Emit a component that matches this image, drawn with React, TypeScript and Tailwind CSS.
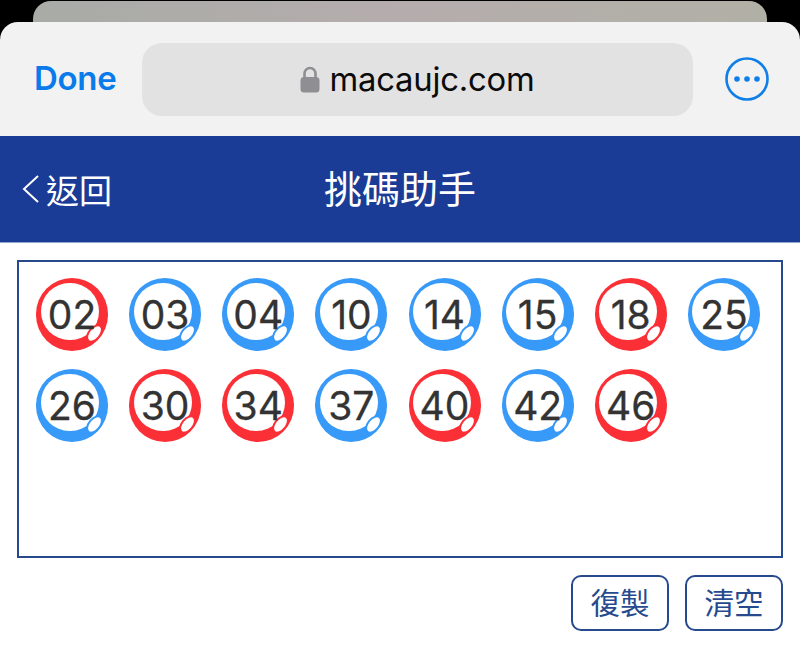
const reds = new Set(["02", "18", "30", "34", "40", "46"]);
const nums = ["02","03","04","10","14","15","18","25","26","30","34","37","40","42","46"];

function Ball({ n }: { n: string }) {
  const red = reds.has(n);
  return (
    <div className={`relative h-[73px] w-[72px] rounded-full ${red ? "bg-[#fb2f36]" : "bg-[#3799f8]"}`}>
      <div className="absolute left-[4.5px] top-[4.5px] h-[57px] w-[58px] rounded-full bg-white" />
      <div className={`absolute left-[50px] top-[50.5px] h-[9px] w-[17px] -rotate-[50deg] rounded-[50%] bg-white ring-2 ${red ? "ring-[#fb2f36]" : "ring-[#3799f8]"}`} />
      <span className="absolute inset-x-0 top-[14px] text-center text-[39px] leading-[46px] text-[#333333] [-webkit-text-stroke:0.3px_#333333] [font-family:Inter,sans-serif]">{n}</span>
    </div>
  );
}

export default function App() {
  return (
    <div className="h-[658px] w-[800px] overflow-hidden bg-white [font-family:'Noto_Sans_CJK_TC',sans-serif]">
      <div className="h-[22px] bg-black px-[33px] pt-px">
        <div className="h-[21px] rounded-t-[18px] bg-gradient-to-r from-[#a8aba6] via-[#b5adad] to-[#b1b0a6]" />
      </div>
      <div className="bg-black">
        <div className="flex h-[114px] items-center rounded-t-[18px] bg-[#f2f2f2] pl-[34px] pr-[31px]">
          <span className="w-[108px] shrink-0 text-[33px] font-semibold tracking-[-0.3px] text-[#0a7bea] [font-family:Inter,sans-serif]">Done</span>
          <div className="flex h-[73px] w-[551px] shrink-0 items-center justify-center gap-[9px] rounded-[20px] bg-[#e2e2e2]">
            <svg width="20" height="27" viewBox="0 0 20 27" fill="none">
              <path d="M4.5 13V7.5a5.5 5.5 0 0 1 11 0V13" stroke="#8e8e93" strokeWidth="2.6" />
              <rect x="0.5" y="11" width="19" height="15.5" rx="3.5" fill="#8e8e93" />
            </svg>
            <span className="text-[32.8px] leading-none tracking-[-0.2px] text-[#0b0b0b] [font-family:Inter,sans-serif]">macaujc.com</span>
          </div>
          <svg className="ml-auto" width="44" height="44" viewBox="0 0 44 44" fill="none">
            <circle cx="22" cy="22" r="20.5" stroke="#0f7ee8" strokeWidth="2.6" />
            <circle cx="12" cy="22" r="2.8" fill="#0f7ee8" />
            <circle cx="22" cy="22" r="2.8" fill="#0f7ee8" />
            <circle cx="32" cy="22" r="2.8" fill="#0f7ee8" />
          </svg>
        </div>
      </div>
      <div className="relative flex h-[106px] items-center justify-center bg-[#1a3c96] text-white">
        <div className="absolute left-[22px] top-[34px] flex items-center gap-[6px]">
          <svg width="18" height="30" viewBox="0 0 18 30" fill="none">
            <path d="M16 2 2 15l14 13" stroke="white" strokeWidth="2" />
          </svg>
          <span className="text-[33px] leading-[38px]">返回</span>
        </div>
        <span className="-mt-[4px] text-[38px] leading-[44px]">挑碼助手</span>
      </div>
      <div className="h-px bg-[#8fa6cc]" />
      <div className="px-[17px] pt-[17px]">
        <div className="flex h-[298px] flex-wrap content-start gap-x-[21.14px] gap-y-[18px] border-2 border-[#274a8e] pl-[17px] pt-[16px]">
          {nums.map((n) => <Ball key={n} n={n} />)}
        </div>
        <div className="mt-[17px] flex justify-end gap-[16px]">
          {["復製", "清空"].map((t) => (
            <button key={t} className="flex h-[56px] w-[98px] items-center justify-center rounded-[10px] border-2 border-[#274a8e] pb-[2px] text-[29.5px] leading-none text-[#274a8e]">{t}</button>
          ))}
        </div>
      </div>
    </div>
  );
}
